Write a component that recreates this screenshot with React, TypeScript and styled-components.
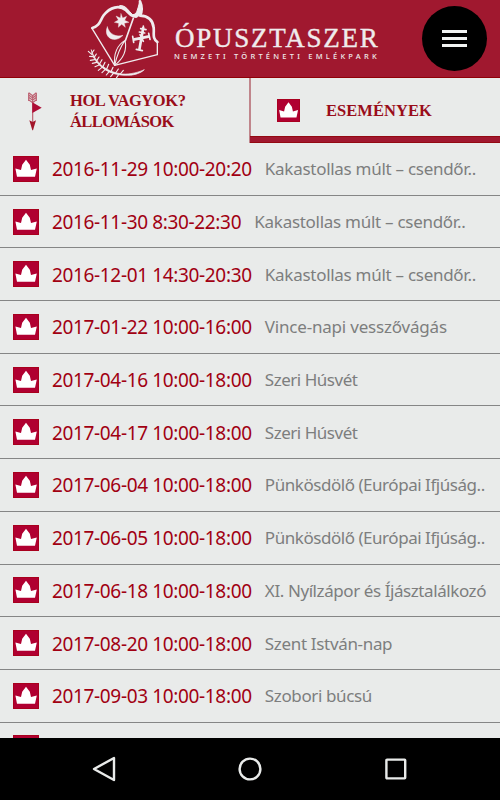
import React from "react";
import styled, { createGlobalStyle } from "styled-components";

const GlobalStyle = createGlobalStyle`
  * { box-sizing: border-box; }
  body { margin: 0; background: #000; }
`;

const Screen = styled.div`
  width: 500px;
  height: 800px;
  display: flex;
  flex-direction: column;
  overflow: hidden;
  background: #e9ebea;
  font-family: "Noto Sans", sans-serif;
`;

const Header = styled.header`
  height: 78px;
  flex: none;
  display: flex;
  align-items: flex-start;
  padding: 0 13px 0 80px;
  background: #a0182f;
  border-bottom: 1px solid #900008;
`;

const EmblemSvg = styled.svg`
  width: 90px;
  height: 78px;
  flex: none;
`;

const Brand = styled.div`
  flex: 1;
  padding: 25px 0 0 5px;
  color: #efebec;
  white-space: nowrap;
`;

const BrandName = styled.div`
  font: 27px/26px "Liberation Serif", serif;
  letter-spacing: 1.75px;
  -webkit-text-stroke: 0.4px #efebec;
`;

const BrandTag = styled.div`
  margin: 1px 0 0 -1px;
  font: 500 7.5px/9px "Noto Sans", sans-serif;
  letter-spacing: 3.23px;
`;

const MenuButton = styled.button`
  width: 65px;
  height: 65px;
  flex: none;
  margin-top: 6px;
  padding: 0;
  display: flex;
  flex-direction: column;
  align-items: center;
  justify-content: center;
  gap: 3.6px;
  border: 0;
  border-radius: 50%;
  background: #000;
`;

const MenuBar = styled.span`
  width: 25px;
  height: 3px;
  background: #f2f4f3;
`;

const Tabs = styled.nav`
  height: 65px;
  flex: none;
  display: grid;
  grid-template-columns: 249px 251px;
`;

const Tab = styled.div<{ $active?: boolean }>`
  display: flex;
  align-items: center;
  padding-left: ${(p) => (p.$active ? 26 : 24)}px;
  gap: ${(p) => (p.$active ? 26 : 28)}px;
  border-left: ${(p) => (p.$active ? "2px solid #c0868c" : "0")};
  position: relative;
  &::after {
    content: "";
    display: ${(p) => (p.$active ? "block" : "none")};
    position: absolute;
    left: -1px;
    right: 0;
    bottom: 0;
    height: 5px;
    background: #a0182f;
    border: solid #930912;
    border-width: 1px 0;
  }
`;

const TabLabel = styled.span<{ $spacing: number }>`
  display: block;
  font: bold 16.5px/21px "Liberation Serif", serif;
  letter-spacing: ${(p) => p.$spacing}px;
  color: #990d1a;
  white-space: nowrap;
`;

const ArrowSvg = styled.svg`
  width: 18px;
  height: 40px;
  flex: none;
`;

const CrownSvg = styled.svg<{ $size: number }>`
  width: ${(p) => p.$size}px;
  height: ${(p) => p.$size}px;
  flex: none;
`;

const List = styled.ul`
  flex: 1;
  min-height: 0;
  margin: 0;
  padding: 0;
  overflow: hidden;
  list-style: none;
`;

const Row = styled.li`
  height: 52.7px;
  display: flex;
  align-items: center;
  padding: 0 0 0 13px;
  border-bottom: 1px solid #858686;
  white-space: nowrap;
`;

const When = styled.span`
  margin-left: 13px;
  padding-top: 1px;
  font-size: 19px;
  line-height: 26px;
  letter-spacing: -0.35px;
  color: #a10012;
`;

const Title = styled.span<{ $spacing: number }>`
  margin-left: 13.2px;
  padding-top: 1px;
  font-size: 17px;
  line-height: 26px;
  letter-spacing: ${(p) => p.$spacing}px;
  color: #7d7e7e;
`;

const NavBar = styled.footer`
  height: 62px;
  flex: none;
  display: flex;
  align-items: center;
  justify-content: space-between;
  padding: 0 92px;
  background: #000;
`;

const NavSvg = styled.svg`
  width: 24px;
  height: 26px;
  fill: none;
  stroke: #e9ebea;
  stroke-width: 2.4;
  stroke-linejoin: round;
`;

const Emblem = () => (
  <EmblemSvg viewBox="0 0 270 234" fill="none" stroke="#f0ecee" strokeLinecap="round" strokeLinejoin="round">
    <path d="M37 84C60 78 60 61 71 46C90 21 118 14 138 31C149 42 156 50 168 49C178 41 182 26 180 4C186 18 188 32 180 47C204 48 219 60 221 84C223 102 216 114 232 126" strokeWidth="8" />
    <path d="M120 17C141 22 150 47 168 52C182 49 185 32 180 4C170 35 171 43 158 44C144 32 138 15 120 17Z" fill="#f0ecee" strokeWidth="3" />
    <path d="M36 85L104 196L232 164V128" strokeWidth="4" />
    <path d="M160 55L136 122" strokeWidth="5" />
    <path d="M135 121C109 137 101 165 104 196C132 174 141 147 135 121ZM135 121C119 144 110 169 104 196" strokeWidth="3.2" />
    <path d="M123 41L128 54L140 49L134 61L147 67L133 70L136 82L125 73L115 82L116 70L103 67L115 60L108 48L121 54Z" fill="#f0ecee" strokeWidth="1" />
    <path d="M82 81C75 98 81 114 99 118C111 120 121 114 129 106C108 112 88 103 82 81Z" fill="#f0ecee" strokeWidth="1.5" />
    <path d="M190 82L178 149M160 119L208 109" strokeWidth="8" strokeLinecap="butt" />
    <path d="M182 86L198 89M190 78V84M169 148L187 152M158 109L161 127M206 100L210 118M178 96L194 99M180 104L190 124" strokeWidth="5" />
    <path d="M34 150C44 184 76 216 126 222C153 224 180 215 193 209C176 225 148 228 122 225C75 220 40 188 34 150Z" fill="#f0ecee" strokeWidth="2" />
    <path d="M36 164L25 154M39 170L29 169M44 179L31 181M50 187L37 190M57 195L45 200M66 202L55 211M76 208L66 218M88 214L79 225M102 218L92 230M117 222L109 234M36 159L42 150M42 173L49 162M49 184L57 171M58 193L66 179M68 202L75 187M79 209L86 193M93 215L99 202M107 219L115 207M121 222L130 211" strokeWidth="3.5" />
  </EmblemSvg>
);

const Crown = ({ size = 26 }: { size?: number }) => (
  <CrownSvg viewBox="0 0 26 26" $size={size}>
    <path d="M0 0H26V26H0Z" fill="#b00031" />
    <path d="M.5 .5H25.5V25.5H.5Z" fill="none" stroke="#a8001d" />
    <path d="M2.4 12.4L8 14L9.2 8.8L13 3.8L16.8 8.8L18 14L23.8 12.4L22 20.8H4Z" fill="#fff" />
  </CrownSvg>
);

const Arrow = () => (
  <ArrowSvg viewBox="0 0 54 120">
    <path d="M26 12V94M14 5L26 14L37 5M14 12L26 21L37 12M14 19L26 28L37 19M14 26L26 35L37 26M14 5V30M37 5V30" fill="none" stroke="#bd6272" strokeWidth="3.6" />
    <path d="M25 34L53 50L25 66Z" fill="#ad0c35" />
    <path d="M16 88L26 93L36 88L27 118H25Z" fill="#a3152a" />
  </ArrowSvg>
);

const events = [
  { when: "2016-11-29 10:00-20:20", title: "Kakastollas múlt – csendőr..", spacing: -0.28 },
  { when: "2016-11-30 8:30-22:30", title: "Kakastollas múlt – csendőr..", spacing: -0.28 },
  { when: "2016-12-01 14:30-20:30", title: "Kakastollas múlt – csendőr..", spacing: -0.28 },
  { when: "2017-01-22 10:00-16:00", title: "Vince-napi vesszővágás", spacing: -0.2 },
  { when: "2017-04-16 10:00-18:00", title: "Szeri Húsvét", spacing: -0.48 },
  { when: "2017-04-17 10:00-18:00", title: "Szeri Húsvét", spacing: -0.48 },
  { when: "2017-06-04 10:00-18:00", title: "Pünkösdölő (Európai Ifjúság..", spacing: -0.46 },
  { when: "2017-06-05 10:00-18:00", title: "Pünkösdölő (Európai Ifjúság..", spacing: -0.46 },
  { when: "2017-06-18 10:00-18:00", title: "XI. Nyílzápor és Íjásztalálkozó", spacing: -0.42 },
  { when: "2017-08-20 10:00-18:00", title: "Szent István-nap", spacing: -0.33 },
  { when: "2017-09-03 10:00-18:00", title: "Szobori búcsú", spacing: -0.38 },
  { when: "", title: "", spacing: 0 },
];

export default function App() {
  return (
    <Screen>
      <GlobalStyle />
      <Header>
        <Emblem />
        <Brand>
          <BrandName>ÓPUSZTASZER</BrandName>
          <BrandTag>NEMZETI TÖRTÉNETI EMLÉKPARK</BrandTag>
        </Brand>
        <MenuButton aria-label="Menü">
          <MenuBar />
          <MenuBar />
          <MenuBar />
        </MenuButton>
      </Header>
      <Tabs>
        <Tab>
          <Arrow />
          <div>
            <TabLabel $spacing={-0.4}>HOL VAGYOK?</TabLabel>
            <TabLabel $spacing={-0.6}>ÁLLOMÁSOK</TabLabel>
          </div>
        </Tab>
        <Tab $active>
          <Crown size={23} />
          <TabLabel $spacing={0.05}>ESEMÉNYEK</TabLabel>
        </Tab>
      </Tabs>
      <List>
        {events.map((e, i) => (
          <Row key={i}>
            <Crown />
            <When>{e.when}</When>
            <Title $spacing={e.spacing}>{e.title}</Title>
          </Row>
        ))}
      </List>
      <NavBar>
        <NavSvg viewBox="0 0 24 26"><path d="M2 13L22 2V24Z" /></NavSvg>
        <NavSvg viewBox="0 0 24 26"><circle cx="12" cy="13" r="10.4" /></NavSvg>
        <NavSvg viewBox="0 0 24 26"><rect x="2.4" y="3.6" width="18.8" height="18.8" rx="0.6" /></NavSvg>
      </NavBar>
    </Screen>
  );
}
